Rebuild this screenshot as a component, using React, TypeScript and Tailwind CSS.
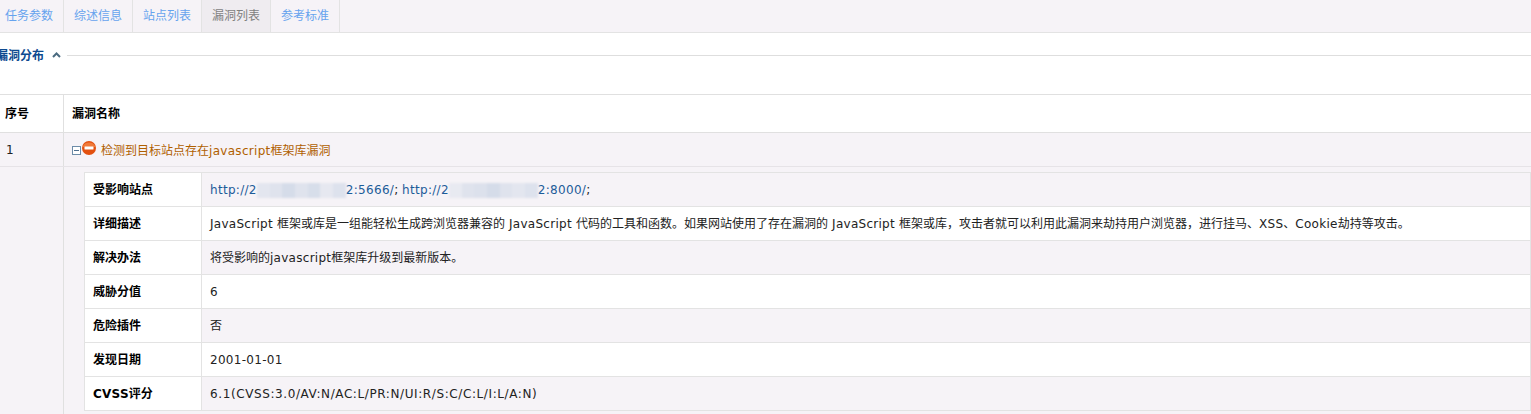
import React from 'react';

const font = "font-['DejaVu_Sans','Noto_Sans_CJK_SC',sans-serif]";

const tabs = ['任务参数', '综述信息', '站点列表', '漏洞列表', '参考标准'];

// the latin runs sit a bit wider than DejaVu at 12px, the CJK ones don't
function Txt({ children }: { children: string }) {
  return (
    <>
      {children.split(/([\x20-\x7e]+)/).map((part, i) =>
        i % 2 === 1 ? (
          <span key={i} className="tracking-[0.27px]">
            {part}
          </span>
        ) : (
          part
        ),
      )}
    </>
  );
}

function Blur({ width, shades }: { width: number; shades: string[] }) {
  return (
    <span className="inline-flex h-[15px] align-middle blur-[1px]" style={{ width }}>
      {shades.map((c, i) => (
        <span key={i} className="flex-1 h-full" style={{ backgroundColor: c }} />
      ))}
    </span>
  );
}

const details: { label: React.ReactNode; value: React.ReactNode; tint: boolean }[] = [
  {
    label: '受影响站点',
    tint: true,
    value: (
      <>
        <a className="text-[#1d5c99] tracking-[0.3px]">
          http://2
          <Blur width={89} shades={['#e3e6ef', '#dfe3ed', '#d5dce9', '#dfe3ed', '#d7deea', '#e6e8f0', '#dde2ed']} />
          2:5666/
        </a>
        ;{' '}
        <a className="text-[#1d5c99] tracking-[0.3px]">
          http://2
          <Blur width={89} shades={['#e8eaf1', '#dfe3ed', '#dce1ec', '#d5dce9', '#dfe3ed', '#e3e6ef', '#dde2ed']} />
          2:8000/
        </a>
        ;
      </>
    ),
  },
  {
    label: '详细描述',
    tint: false,
    value: (
      <Txt>
        JavaScript 框架或库是一组能轻松生成跨浏览器兼容的 JavaScript 代码的工具和函数。如果网站使用了存在漏洞的 JavaScript 框架或库，攻击者就可以利用此漏洞来劫持用户浏览器，进行挂马、XSS、Cookie劫持等攻击。
      </Txt>
    ),
  },
  { label: '解决办法', tint: true, value: <Txt>将受影响的javascript框架库升级到最新版本。</Txt> },
  { label: '威胁分值', tint: false, value: '6' },
  { label: '危险插件', tint: true, value: '否' },
  { label: '发现日期', tint: false, value: <span className="tracking-[0.3px]">2001-01-01</span> },
  {
    label: (
      <>
        <span className="tracking-[0.25px]">CVSS</span>评分
      </>
    ),
    tint: true,
    value: <span className="tracking-[0.6px]">6.1(CVSS:3.0/AV:N/AC:L/PR:N/UI:R/S:C/C:L/I:L/A:N)</span>,
  },
];

export default function App() {
  return (
    <div className={`${font} w-[1531px] h-[414px] overflow-hidden bg-white text-[12px] leading-4 text-[#222]`}>
      {/* Tabs */}
      <div className="flex h-[33px] bg-[#f6f3f7] border-b border-[#e3e3e3]">
        {tabs.map((tab, i) => (
          <div
            key={tab}
            className={`flex items-center h-full border-r border-[#e3e3e3] ${i === 0 ? 'w-[64px] pl-[5px]' : 'w-[69px] pl-[10px]'} ${
              i === 3 ? 'bg-[#efecf0] text-[#7f7f7f]' : 'text-[#66a3ee]'
            }`}
          >
            {tab}
          </div>
        ))}
      </div>

      {/* Section title */}
      <div className="flex items-center h-[45px] -ml-[4px]">
        <span className="font-bold text-[#0d4a8f]">漏洞分布</span>
        <svg className="ml-[8px] mt-[-1px]" width="9" height="6" viewBox="0 0 9 6">
          <path d="M1 5l3.5-3.5L8 5" fill="none" stroke="#4b6b80" strokeWidth="2" />
        </svg>
        <div className="flex-1 h-px bg-[#dedede] ml-[6px]" />
      </div>

      {/* Result table */}
      <div className="mt-[16px] border-t border-[#e0e0e0]">
        <div className="flex h-[38px] border-b border-[#e0e0e0] font-bold text-black">
          <div className="flex items-center w-[64px] pl-[5px] border-r border-[#e0e0e0]">序号</div>
          <div className="flex items-center pl-[8px]">漏洞名称</div>
        </div>
        <div className="flex h-[34px] bg-[#f6f3f7] border-b border-[#e6e3e7]">
          <div className="flex items-center w-[64px] pl-[6px] border-r border-[#e0e0e0]">1</div>
          <div className="flex items-center pl-[8px] text-[#b06000]">
            <span className="flex items-center justify-center w-[9px] h-[9px] mt-[2px] border border-[#6d8ca8] bg-white">
              <span className="w-[5px] h-px bg-[#4f6f8f]" />
            </span>
            <svg className="ml-px mt-[-4px]" width="14" height="14" viewBox="0 0 14 14">
              <circle cx="7" cy="7" r="7" fill="#e2500f" />
              <path d="M0.5 6a7 7 0 0 1 13 0z" fill="#f07a3a" />
              <rect x="2.5" y="5.5" width="9" height="3" rx="0.5" fill="#fff" />
            </svg>
            <span className="ml-[5px] mt-[2px]">
              检测到目标站点存在<span className="tracking-[0.3px]">javascript</span>框架库漏洞
            </span>
          </div>
        </div>
        <div className="flex bg-[#f6f3f7] h-[250px]">
          <div className="w-[64px] shrink-0 border-r border-[#e0e0e0]" />
          <div className="flex-1 pl-[20px] pt-[5px]">
            <table className="w-full border-collapse border border-[#e3e3e3]">
              <tbody>
                {details.map((row, i) => (
                  <tr key={i} className="h-[34px]">
                    <td className="w-[117px] pl-[8px] font-bold text-black bg-white border border-[#e3e3e3]">{row.label}</td>
                    <td className={`pl-[8px] border border-[#e3e3e3] ${row.tint ? 'bg-[#f6f3f7]' : 'bg-white'}`}>{row.value}</td>
                  </tr>
                ))}
              </tbody>
            </table>
          </div>
        </div>
      </div>
    </div>
  );
}
